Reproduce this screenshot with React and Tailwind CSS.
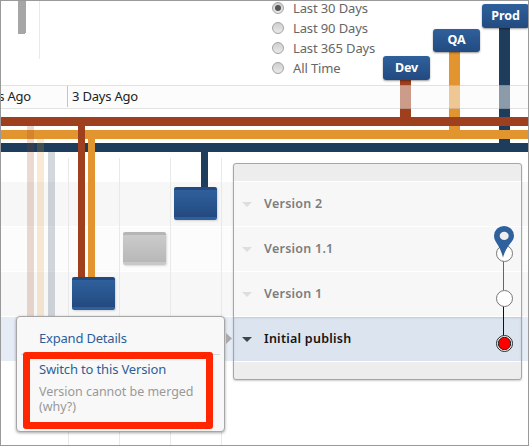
import React from "react";

const RUST = "#9e3f1d";
const ORANGE = "#e2952f";
const NAVY = "#1e3c5b";

const ranges = ["Last 30 Days", "Last 90 Days", "Last 365 Days", "All Time"];
const rowTints = ["bg-[#f7f7f7]", "bg-[#fcfcfc]", "bg-[#f7f7f7]", "bg-[#e5ecf5]"];
const versions = ["Version 2", "Version 1.1", "Version 1", "Initial publish"];

function Radio({ label, checked }) {
  return (
    <label className="flex h-5 items-center">
      <span className="flex size-3 items-center justify-center rounded-full border border-[#a3a3a3] bg-linear-to-b from-[#cfcfcf] to-[#e9e9e9]">
        {checked && <span className="size-1.5 rounded-full bg-[#555]" />}
      </span>
      <span className="ml-[9px] text-[13px] leading-5 tracking-[-0.12px] text-[#666]">{label}</span>
    </label>
  );
}

function Branches() {
  return (
    <svg className="absolute inset-0" width="527" height="444" viewBox="1 1 527 444" shapeRendering="crispEdges">
      <path d="M39.5 1V59" stroke="#e9e9e9" />
      <path d="M18 1h8v31q0 2-2 2h-4q-2 0-2-2z" fill="#a6a6a6" />
      {[68.5, 119.5, 170.5, 221.5].map((x) => (
        <path key={x} d={`M${x} 158V445`} stroke="#e9e9e9" />
      ))}
      <rect x="499" y="20" width="11" height="125" fill={NAVY} />
      <rect x="449" y="45" width="11" height="87" fill={ORANGE} />
      <rect x="400" y="72" width="11" height="48" fill={RUST} />
      <rect x="1" y="143" width="527" height="9" fill={NAVY} />
      <rect x="1" y="130" width="527" height="9" fill={ORANGE} />
      <rect x="1" y="117" width="527" height="9" fill={RUST} />
      <rect x="27" y="126" width="7" height="190" fill={RUST} opacity="0.2" />
      <rect x="37" y="139" width="7" height="177" fill={ORANGE} opacity="0.2" />
      <rect x="48" y="152" width="7" height="164" fill={NAVY} opacity="0.2" />
      <rect x="88" y="139" width="7" height="140" fill={ORANGE} />
      <rect x="78" y="126" width="7" height="153" fill={RUST} />
      <rect x="201" y="152" width="7" height="37" fill={NAVY} />
    </svg>
  );
}

function Badge({ className, children }) {
  return (
    <div className={`absolute z-20 flex w-[47px] items-center justify-center rounded-[3px] bg-linear-to-b from-[#2f609c] to-[#234a80] text-[12.5px] leading-none font-bold tracking-[-0.1px] text-white shadow-[0_1px_2px_rgba(0,0,0,0.4)] ${className}`}>
      {children}
    </div>
  );
}

function Block({ className }) {
  return <div className={`absolute h-[33px] w-[43px] rounded-[2px] border-y-[3px] bg-linear-to-b shadow-[1px_1px_2px_rgba(0,0,0,0.15)] ${className}`} />;
}

function VersionPanel() {
  return (
    <div className="absolute top-[162px] left-[232px] z-10 h-[217px] w-[289px] overflow-hidden rounded-[3px] border border-[#a6a6a6] bg-[#ededed] shadow-[0_1px_2px_rgba(0,0,0,0.2)]">
      <div className="h-[17px]" />
      <div className="flex flex-col border-t border-white">
        {versions.map((name, i) => {
          const active = i === 3;
          return (
            <div
              key={name}
              className={`flex h-[45px] items-center border-b border-white pl-2 ${active ? "bg-[#dce4f0] shadow-[inset_0_1px_2px_rgba(60,80,120,0.2)]" : "bg-[#f7f7f7]"}`}
            >
              <svg width="10" height="5" viewBox="0 0 10 5" className="mt-[1px]">
                <path d="M0 0h10L5 5z" fill={active ? "#404448" : "#dedede"} />
              </svg>
              <span className={`ml-[12px] text-[12.5px] leading-5 font-semibold tracking-[0.25px] ${active ? "text-[#151515]" : "text-[#7d7d7d]"}`}>{name}</span>
            </div>
          );
        })}
      </div>
      <svg className="absolute top-[56px] right-[4px]" width="26" height="142" viewBox="491 220 26 142">
        <path d="M503.5 261V290" stroke="#666" shapeRendering="crispEdges" />
        <path d="M503.5 306V336" stroke="#111" shapeRendering="crispEdges" />
        <circle cx="504.5" cy="253.5" r="8" fill="#fff" stroke="#777" />
        <circle cx="504.5" cy="298.5" r="8" fill="#fff" stroke="#777" />
        <circle cx="504.5" cy="343.5" r="8" fill="#fff" stroke="#222" />
        <circle cx="504.5" cy="343.5" r="6.2" fill="#f00" stroke="#222" />
        <path d="M504 226a10 9.8 0 0 0-10 9.8c0 3.5 1.5 5.8 3.5 8.7 2.3 3.5 4 7.500 5.500 13 1.500-5.500 3.700-9.500 6.500-13 2.500-3 4.500-5.200 4.500-8.700A10 9.800 0 0 0 504 226z" fill="#2f629d" />
        <ellipse cx="504.2" cy="235.9" rx="4.5" ry="4.2" fill="#efefed" />
      </svg>
    </div>
  );
}

function ContextMenu() {
  return (
    <div className="absolute top-[315px] left-[15px] z-10 h-[116px] w-[209px] rounded-[4px] border border-[#a6a6a6] bg-[#f8f8f8] px-1 text-[13px] shadow-[0_1px_3px_rgba(0,0,0,0.35)]">
      <div className="flex h-[38px] items-end border-b border-[#d9d9d9] pb-[6px] pl-[18px] leading-5 tracking-[-0.2px] text-[#2b5f9a]">Expand Details</div>
      <div className="mt-[4px] pl-[18px] leading-5 tracking-[-0.15px] text-[#2b5f9a]">Switch to this Version</div>
      <div className="mt-[5px] pl-[18px] text-[12.5px] leading-[15px] tracking-[-0.03px] text-[#999]">
        Version cannot be merged
        <br />
        (why?)
      </div>
      <div className="absolute top-[35px] left-[6px] h-[77px] w-[190px] rounded-[3px] border-[7px] border-[#ff2600]" />
      <svg className="absolute top-[16px] left-[209px]" width="6" height="11" viewBox="0 0 6 11">
        <path d="M0 0l6 5.500-6 5.500z" fill="#aaa" />
      </svg>
    </div>
  );
}

export default function App() {
  return (
    <div className="relative flex h-[446px] w-[529px] flex-col overflow-hidden border border-[#999] bg-white font-['Noto_Sans',sans-serif]">
      <Branches />
      <header className="flex h-[84px] flex-col pt-0 pl-[271px]">
        <div className="-mt-[3px]">
          {ranges.map((label, i) => (
            <Radio key={label} label={label} checked={i === 0} />
          ))}
        </div>
      </header>
      <div className="relative flex h-6 shrink-0 items-start border-y border-black/10 bg-[#fafafa]/50 text-[13px] leading-[20px] tracking-[-0.2px] text-[#222]">
        <div className="flex h-[21px] w-[67px] justify-end border-r border-[#c4c4c4] pr-[36px] whitespace-nowrap">s Ago</div>
        <div className="pl-1">3 Days Ago</div>
      </div>
      <main className="flex flex-1 flex-col pt-[73px]">
        {rowTints.map((tint, i) => (
          <div key={i} className={`h-[45px] border-b border-white ${tint}`} />
        ))}
      </main>
      <Badge className="top-[55px] left-[382px] h-6">Dev</Badge>
      <Badge className="top-[28px] left-[432px] h-[23px]">QA</Badge>
      <Badge className="top-[3px] left-[481px] h-6">Prod</Badge>
      <Block className="top-[186px] left-[173px] border-t-[#224a80] border-b-[#2f609c] from-[#2f609c] to-[#234a80]" />
      <Block className="top-[231px] left-[122px] border-t-[#b5b5b5] border-b-[#c8c8c8] from-[#cbcbcb] to-[#b8b8b8]" />
      <Block className="top-[276px] left-[71px] border-t-[#224a80] border-b-[#2f609c] from-[#2f609c] to-[#234a80]" />
      <VersionPanel />
      <ContextMenu />
    </div>
  );
}
